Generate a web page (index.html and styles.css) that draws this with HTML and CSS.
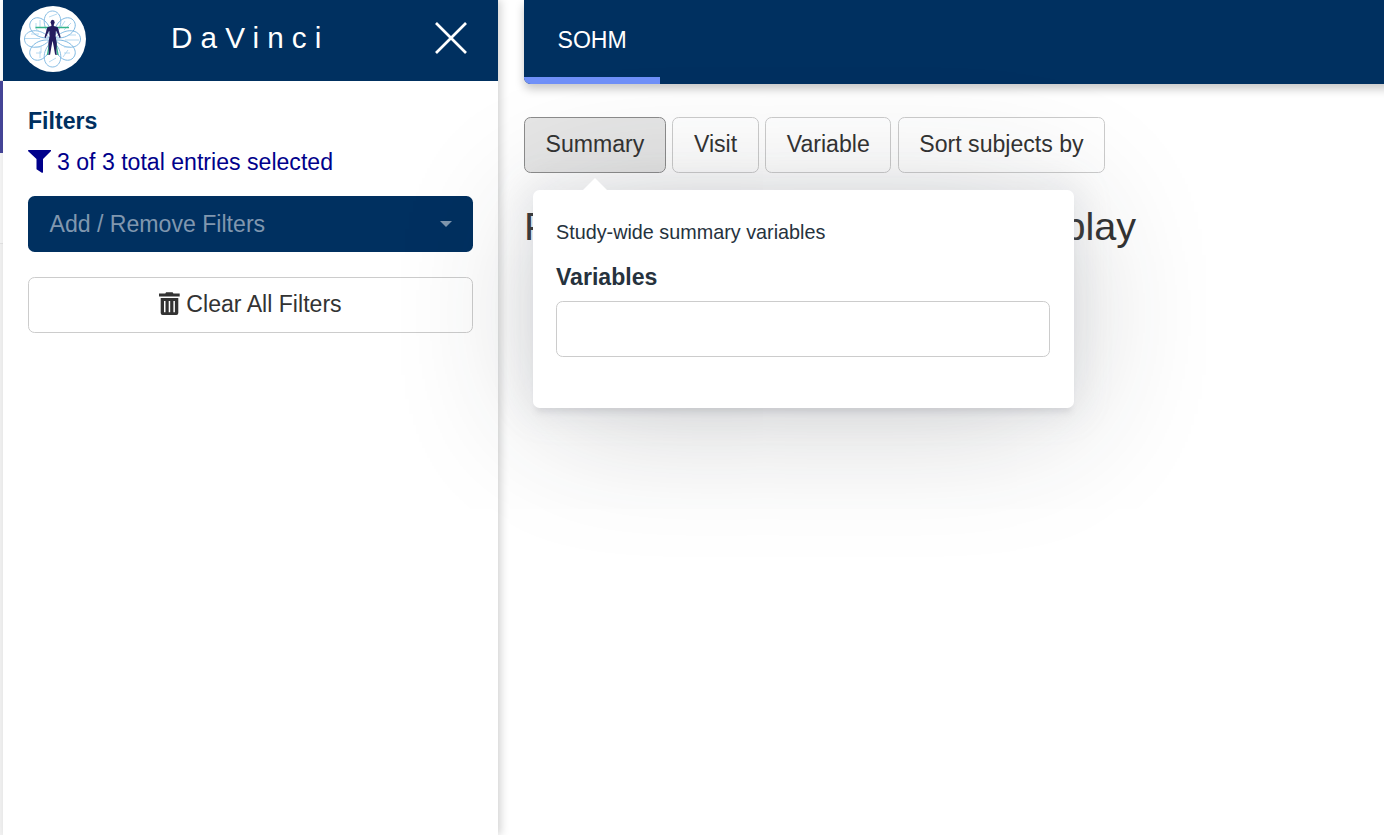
FILE: index.html
```html
<!DOCTYPE html>
<html lang="en">
<head>
<meta charset="utf-8">
<title>DaVinci</title>
<link rel="stylesheet" href="styles.css">
</head>
<body>
<div class="app">
  <div class="rail"><div class="rail-top"></div><div class="rail-active"></div><div class="rail-item"></div><div class="rail-rest"></div></div>
  <aside class="sidebar">
    <header class="brand">
      <svg class="logo" viewBox="0 0 66 66">
        <circle cx="33" cy="33" r="33" fill="#fff"/>
        <g fill="none" stroke="#7ab6e0" stroke-width=".9">
          <path d="M32.500 31C20 21 23 5 32.500 5S45 21 32.500 31z"/>
          <path d="M32.500 31C20 21 23 5 32.500 5S45 21 32.500 31z" transform="rotate(48 32.500 33)"/>
          <path d="M32.500 31C20 21 23 5 32.500 5S45 21 32.500 31z" transform="rotate(90 32.500 33)"/>
          <path d="M32.500 31C20 21 23 5 32.500 5S45 21 32.500 31z" transform="rotate(132 32.500 33)"/>
          <path d="M32.500 31C20 21 23 5 32.500 5S45 21 32.500 31z" transform="rotate(180 32.500 33)"/>
          <path d="M32.500 31C20 21 23 5 32.500 5S45 21 32.500 31z" transform="rotate(228 32.500 33)"/>
          <path d="M32.500 31C20 21 23 5 32.500 5S45 21 32.500 31z" transform="rotate(270 32.500 33)"/>
          <path d="M32.500 31C20 21 23 5 32.500 5S45 21 32.500 31z" transform="rotate(312 32.500 33)"/>
        </g>
        <g fill="none" stroke="#a5d0ed" stroke-width=".8">
          <path d="M5 32.500h15M11 28h8M45 34h14M48 29h8M16 17v6l4 3M20 14v8M45 15l-4 6M51 17l-7 7M16 47h5v-5M20 52v-7M44 47h6M43 51l5-7M29 11l8-3M29 56l7-4M22 41h-7M50 41h-6"/>
        </g>
        <path d="M15.500 21.500h33.500" stroke="#35b58a" stroke-width="1.300"/>
        <path d="M30 35l-2.500 14M35.500 35l2.500 14" stroke="#35b58a" stroke-width="1.400" fill="none"/>
        <g fill="#241c5e">
          <ellipse cx="32.600" cy="16.200" rx="2" ry="2.500"/>
          <path d="M31.400 18h2.400v2l4 1.300 1.300 4.500 1.600 5.500-1 1-2.800-6-1-1.500-.3 5.200 1.200 7-.5 10 .8 1.800h-2l-1.500-9-1-5-1 5-1.500 9h-2l.8-1.800-.5-10 1.200-7-.3-5.200-1 1.500-2.800 6-1-1 1.600-5.500 1.300-4.500 4-1.300z"/>
        </g>
      </svg>
      <h1 class="title">DaVinci</h1>
      <svg class="close" viewBox="0 0 34 34"><path d="M2 2l30 30M32 2L2 32"/></svg>
    </header>
    <div class="filters">
      <div class="filters-label">Filters</div>
      <div class="count">
        <svg class="funnel" viewBox="0 0 23 23"><path d="M.7 0h21.600c.8 0 1 .7.500 1.200L15 9v13c0 .8-.6 1-1.200.7L8.500 19.200V9L.2 1.200C-.2.700 0 0 .7 0z"/></svg>
        <span>3 of 3 total entries selected</span>
      </div>
      <div class="select"><span>Add / Remove Filters</span><i class="caret"></i></div>
      <div class="clear">
        <svg class="trash" viewBox="0 0 21 23"><path fill-rule="evenodd" d="M0 1.500h6.300L7.100.3h6.500l.8 1.200h6.300v2.900H0zM1.700 6h17.600v15a2 2 0 0 1-2 2H3.700a2 2 0 0 1-2-2zM5 9v11.200h1.500V9zm4.700 0v11.200h1.500V9zm4.700 0v11.200h1.500V9z"/></svg>
        <span>Clear All Filters</span>
      </div>
    </div>
  </aside>
  <main class="main">
    <nav class="nav"><div class="tab">SOHM</div></nav>
    <div class="toolbar">
      <div class="btn active">Summary</div>
      <div class="btn">Visit</div>
      <div class="btn">Variable</div>
      <div class="btn">Sort subjects by</div>
    </div>
    <h2 class="heading"><span>P</span><span>play</span></h2>
  </main>
</div>
<div class="popover">
  <svg class="arrow" viewBox="0 0 26 13"><path d="M0 13L13 0l13 13z"/></svg>
  <div class="hint">Study-wide summary variables</div>
  <div class="field-label">Variables</div>
  <div class="field"></div>
</div>
</body>
</html>
```
FILE: styles.css
```css
* { box-sizing: border-box; }
body {
  margin: 0;
  height: 835px;
  overflow: hidden;
  background: #fff;
  color: #333;
  font: 23.1px/33px "Liberation Sans", Arial, sans-serif;
}
.app { display: flex; height: 835px; }
.rail { width: 3px; display: flex; flex-direction: column; }
.rail-top { height: 81px; border-bottom: 1px solid #ddd; }
.rail-active { height: 72px; background: #46469a; }
.rail-item { height: 91px; background: #f6f6f6; border-bottom: 1px solid #e4e4e4; }
.rail-rest { flex: 1; background: #f2f2f2; }
.sidebar {
  width: 495px;
  background: #fff;
  box-shadow: 3px 0 8px rgba(0, 0, 0, .17);
}
.brand {
  display: flex;
  align-items: flex-start;
  height: 81px;
  padding: 6px 30px 0 17px;
  background: #003060;
  color: #fff;
}
.logo { width: 66px; height: 66px; }
.title {
  flex: 1;
  margin: 15px 0 0 85px;
  font-size: 29.7px;
  font-weight: 400;
  letter-spacing: 8.1px;
}
.close { width: 34px; height: 34px; margin-top: 14.500px; fill: none; stroke: #fff; stroke-width: 2.700; }
.filters { padding: 24px 25px; }
.filters-label { color: #003060; font-weight: 700; }
.count {
  display: flex;
  align-items: center;
  gap: 6px;
  height: 33px;
  margin-top: 8px;
  color: #00008b;
}
.funnel { width: 23px; height: 23px; margin-bottom: 2px; fill: #00008b; }
.select {
  display: flex;
  align-items: center;
  justify-content: space-between;
  height: 56px;
  margin-top: 17px;
  padding: 0 21px 0 21.500px;
  border-radius: 6.600px;
  background: #003060;
  color: #8097af;
}
.caret {
  border: 6.600px solid transparent;
  border-top-color: #8097af;
  border-bottom: 0;
}
.clear {
  display: flex;
  align-items: center;
  justify-content: center;
  gap: 6px;
  height: 56px;
  margin-top: 25px;
  padding-bottom: 1px;
  border: 1px solid #ccc;
  border-radius: 6.600px;
}
.trash { width: 21px; height: 23px; margin-bottom: 3px; fill: #333; }
.main { flex: 1; min-width: 0; padding-left: 26px; }
.nav {
  height: 84px;
  margin-right: -8px;
  background: #003060;
  border-bottom-left-radius: 6.600px;
  box-shadow: 0 5px 10px rgba(0, 0, 0, .22);
}
.tab {
  width: 136px;
  height: 84px;
  padding: 24px 33.500px 0;
  border-bottom-left-radius: 6.600px;
  background: linear-gradient(#003060 77px, #7090f8 77px);
  color: #fff;
}
.toolbar { display: flex; gap: 6.600px; margin-top: 33px; }
.btn {
  height: 56px;
  padding: 10px 20.500px;
  border: 1px solid #ccc;
  border-radius: 6.600px;
  background: #fff;
  white-space: nowrap;
}
.btn.active { background: #e6e6e6; border-color: #8c8c8c; }
.heading {
  display: flex;
  justify-content: space-between;
  width: 612px;
  margin: 31px 0 0;
  font-size: 39.600px;
  font-weight: 400;
  line-height: 44px;
}
.popover {
  position: absolute;
  left: 532.600px;
  top: 190px;
  width: 541px;
  height: 218px;
  padding: 26px 23.400px;
  border-radius: 6.600px;
  background: #fff;
  color: #26323d;
  box-shadow: 0 0 33px 6.600px rgba(154, 161, 177, .15), 0 14px 145px -8px rgba(36, 42, 44, .24), 0 6.600px 6.600px -3.300px rgba(91, 94, 105, .15);
}
.arrow { position: absolute; left: 49px; top: -12px; width: 26px; height: 13px; fill: #fff; }
.hint { font-size: 19.800px; }
.field-label { margin-top: 12px; font-weight: 700; }
.field { height: 56px; margin-top: 7px; border: 1px solid #ccc; border-radius: 6.600px; }
```
